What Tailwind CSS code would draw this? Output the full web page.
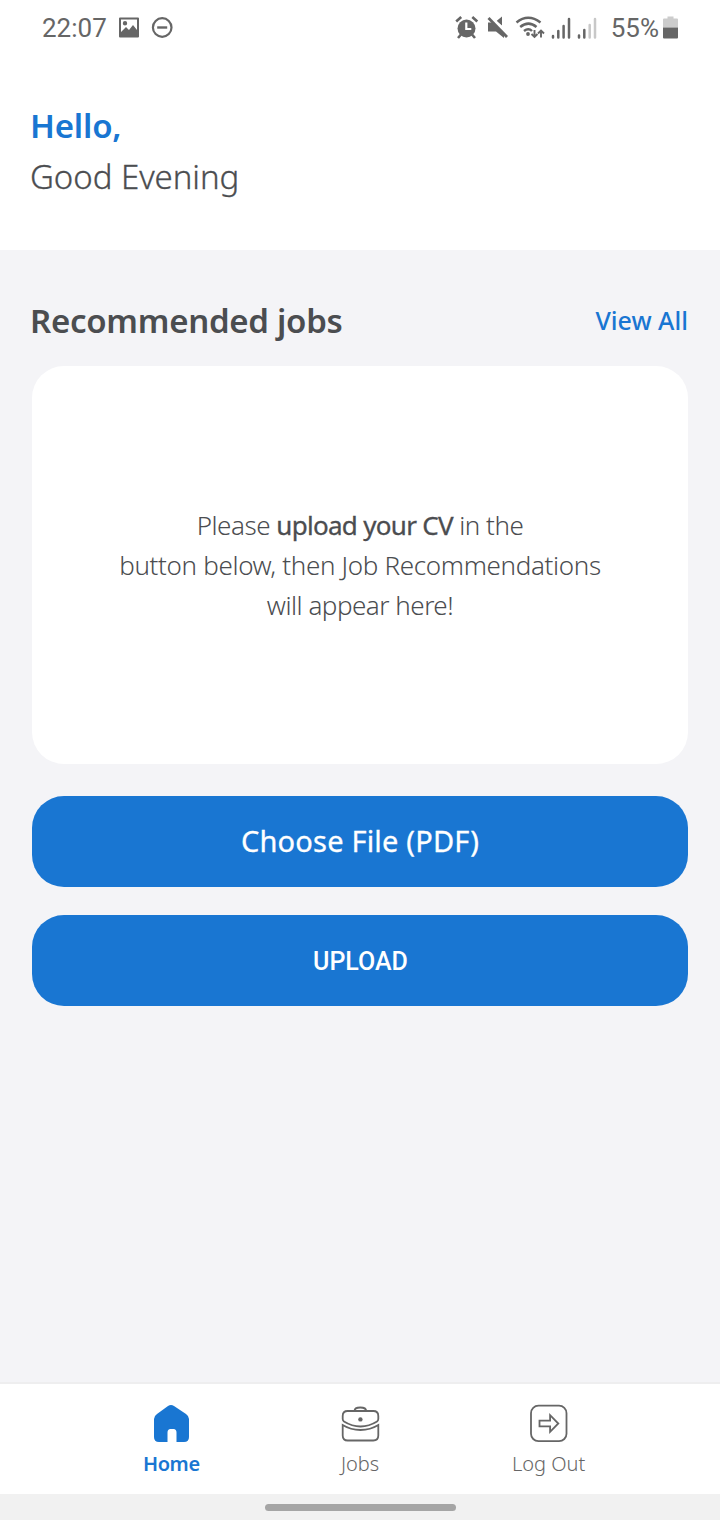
<!DOCTYPE html>
<html lang="en">
<head>
<meta charset="utf-8">
<title>Jobs Home</title>
<script src="https://cdn.jsdelivr.net/npm/@tailwindcss/browser@4"></script>
</head>
<body class="w-[720px] h-[1520px] overflow-hidden bg-[#f4f4f7] font-['Noto_Sans','Open_Sans',sans-serif] text-[#4b4d50] flex flex-col">
<header class="h-[250px] bg-white shrink-0">
  <div class="h-[56px] flex justify-between pl-[42px] pr-[42px] text-[#666] font-['Roboto',sans-serif] text-[26px] leading-[56px]">
    <div class="flex items-center">
      <span>22:07</span>
      <svg class="ml-[11px] w-[22px] h-[22px]" viewBox="0 0 22 22"><path fill="currentColor" fill-rule="evenodd" d="M2 .5h18q1 0 1 1v18q0 1-1 1H2q-1 0-1-1v-18q0-1 1-1zM3 2.500v12.500l5-5 3 3 4-5 4 5V2.500zM7 4a2.200 2.200 0 1 1 0 4.400 2.200 2.200 0 0 1 0-4.400z"/></svg>
      <svg class="ml-[11px] w-[22px] h-[22px]" viewBox="0 0 22 22" fill="none" stroke="currentColor" stroke-width="2.200"><circle cx="11.200" cy="10.500" r="9.300"/><path d="M6.200 10.500h10" stroke-width="2.400"/></svg>
    </div>
    <div class="flex items-center">
      <svg class="w-[144px] h-[26px]" viewBox="455 15 144 26" fill="none" stroke="currentColor">
        <circle cx="466.500" cy="28.500" r="9" fill="currentColor" stroke="none"/><path stroke-width="2.600" d="M456.200 21.500l5-4.500M477.300 21.500l-5-4.500M461 34.500l-3 3.500M472 34.500l3 3.500"/><path stroke="#fff" stroke-width="2.200" d="M466.300 22.500v6.500h5"/>
        <path fill="currentColor" stroke="none" d="M488 22.500h6L504 34.500V38l-8-6.500h-8zM496.500 21l5.500-4.500v9z"/><path stroke="#fff" stroke-width="2" d="M491 16.500l17 17.500"/><path stroke-width="2.800" d="M488.500 18l18.500 19"/>
        <path stroke-width="2.500" d="M516.500 22.500q11.500-9.500 24 0M520.200 27q8.300-6.800 16.300 0M524 31q4.500-3.600 8 0"/><circle cx="528" cy="34" r="1.900" fill="currentColor" stroke="none"/><path stroke-width="1.900" d="M534.500 30v7m-3-3l3 3 3-3M541 37.500v-7m-3 3l3-3 3 3"/>
        <g stroke-width="2.500" stroke-linecap="round"><path d="M553 36v1.500M558.300 31v6.500M563.600 26v11.500M569 19v18.500M579 35.500v2M584.300 30v7.500"/><path stroke="#c8c8c8" d="M589.700 25v12.500M595 19v18.500"/></g>
      </svg>
      <span class="ml-3">55%</span>
      <svg class="ml-1 w-[15px] h-[24px]" viewBox="0 0 15 24"><path fill="#ccc" d="M4.500 .5h6v2H14q1 0 1 1v8H0v-8q0-1 1-1h3.500z"/><path fill="#666" d="M0 11.500h15v10q0 1-1 1H1q-1 0-1-1z"/></svg>
    </div>
  </div>
  <div class="px-[30px] pt-[44px] text-[33px] leading-[51px]">
    <p class="text-[#1976d2] font-semibold tracking-[-0.2px]">Hello,</p>
    <p class="font-light tracking-[-0.05px] [-webkit-text-stroke:0.3px_currentColor]">Good Evening</p>
  </div>
</header>
<main class="flex-1 px-8 pt-[46px]">
  <div class="h-[70px] flex items-center justify-between -ml-[2px] pb-[20px]">
    <h1 class="text-[33px] font-semibold leading-[50px] tracking-[-0.28px]">Recommended jobs</h1>
    <a class="text-[25px] font-medium text-[#1976d2]">View All</a>
  </div>
  <section class="h-[398px] rounded-[32px] bg-white flex items-center justify-center text-center text-[26px] leading-[40px] font-light tracking-[-0.34px]">
    <p><span class="tracking-[-0.48px]">Please <span class="font-normal tracking-[-0.7px] [-webkit-text-stroke:0.3px_currentColor]">upload your CV</span> in the</span><br>button below, then Job Recommendations<br><span class="tracking-[-0.5px]">will appear here!</span></p>
  </section>
  <button class="mt-8 w-full h-[91px] rounded-[32px] bg-[#1976d2] text-white text-[29px] font-normal tracking-[0.2px] [-webkit-text-stroke:0.3px_currentColor] block pb-[2px]">Choose File (PDF)</button>
  <button class="mt-7 w-full h-[91px] rounded-[32px] bg-[#1976d2] text-white text-[25px] font-medium font-['Roboto',sans-serif] block pt-[2px] pl-px">UPLOAD</button>
</main>
<nav class="h-[112px] border-t-2 border-[#eeeeef] bg-white flex px-[77px] pt-[20px] text-[20px] leading-[28px] text-[#666]">
  <a class="flex-1 flex flex-col items-center gap-[6px] font-semibold text-[#1976d2] tracking-[-0.4px]"><svg class="w-10 h-10" viewBox="0 0 40 40"><path fill="currentColor" d="M17 2q3-2 6 0l12 8q3 2 3 5v18q0 5-5 5h-7.500V28.500q0-3.500-3-3.500h-3q-3 0-3 3.500v9.500H8q-5 0-5-5V15q0-3 3-5z"/></svg>Home</a>
  <a class="flex-1 flex flex-col items-center gap-[6px] font-light"><svg class="w-10 h-10" viewBox="0 0 40 40" fill="none" stroke="currentColor" stroke-width="1.800"><path d="M14.500 7q0-3.500 5.800-3.500T26.200 7"/><path d="M4 17.500q-1.300-1-1.300-2.500v-3q0-5 5-5h25.600q5 0 5 5v3q0 1.500-1.300 2.500Q29 22.500 20.500 22.500T4 17.500z"/><path d="M2.700 21q8 5 17.800 5t17.800-5v10.500q0 5-5 5H7.700q-5 0-5-5z"/><circle cx="20.400" cy="15.400" r="2.200" fill="currentColor" stroke="none"/></svg>Jobs</a>
  <a class="flex-1 flex flex-col items-center gap-[6px] font-light"><svg class="w-10 h-10" viewBox="0 0 40 40" fill="none" stroke="currentColor" stroke-width="1.800"><rect x="2" y="1.700" width="35.500" height="35.500" rx="7.500"/><path d="M10.500 16.700h10.600v-5.500l8.200 8.300-8.200 8.300v-5.500H10.500z"/></svg>Log Out</a>
</nav>
<footer class="h-[26px] bg-[#f1f1f1] flex items-center justify-center"><div class="w-[191px] h-[7px] rounded-full bg-[#a5a5a5]"></div></footer>
</body>
</html>
